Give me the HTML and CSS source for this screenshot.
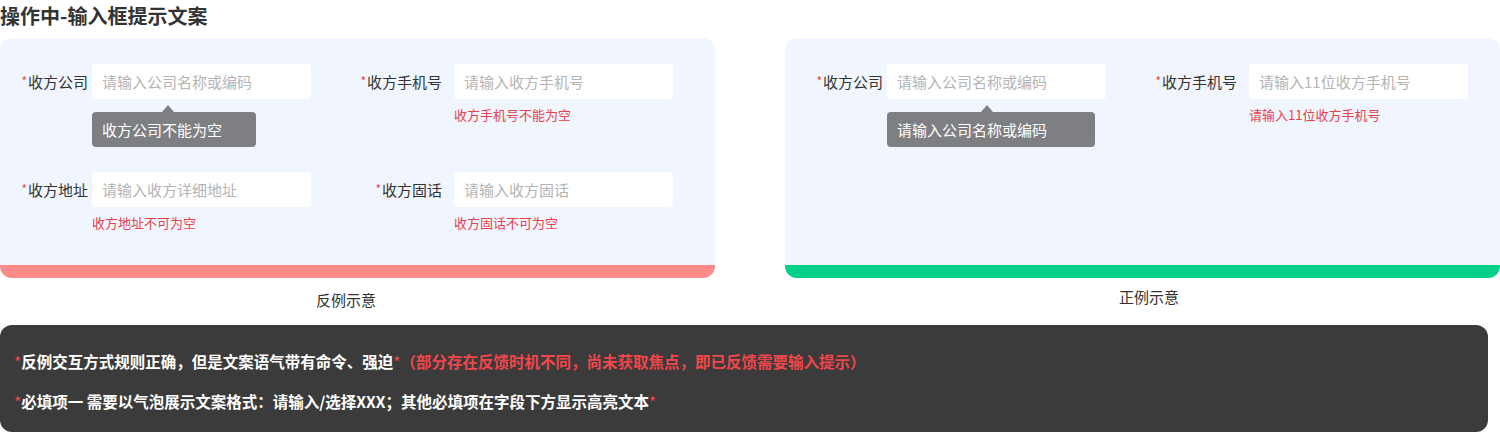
FILE: index.html
```html
<!DOCTYPE html>
<html lang="zh-CN">
<head>
<meta charset="utf-8">
<title>操作中-输入框提示文案</title>
<link rel="stylesheet" href="styles.css">
</head>
<body>
<h1 class="title">操作中-输入框提示文案</h1>
<div class="panels">
  <div class="col">
    <div class="panel panel-bad">
      <div class="grid">
        <div class="field">
          <label class="label"><span class="req">*</span>收方公司</label>
          <div class="control">
            <div class="input">请输入公司名称或编码</div>
            <div class="tip tip-bad">收方公司不能为空</div>
          </div>
        </div>
        <div class="field field-2">
          <label class="label"><span class="req">*</span>收方手机号</label>
          <div class="control">
            <div class="input">请输入收方手机号</div>
            <div class="err">收方手机号不能为空</div>
          </div>
        </div>
        <div class="field">
          <label class="label"><span class="req">*</span>收方地址</label>
          <div class="control">
            <div class="input">请输入收方详细地址</div>
            <div class="err">收方地址不可为空</div>
          </div>
        </div>
        <div class="field field-2">
          <label class="label"><span class="req">*</span>收方固话</label>
          <div class="control">
            <div class="input">请输入收方固话</div>
            <div class="err">收方固话不可为空</div>
          </div>
        </div>
      </div>
    </div>
    <div class="caption caption-bad">反例示意</div>
  </div>
  <div class="col">
    <div class="panel panel-good">
      <div class="grid">
        <div class="field">
          <label class="label"><span class="req">*</span>收方公司</label>
          <div class="control">
            <div class="input">请输入公司名称或编码</div>
            <div class="tip tip-good">请输入公司名称或编码</div>
          </div>
        </div>
        <div class="field field-2">
          <label class="label"><span class="req">*</span>收方手机号</label>
          <div class="control">
            <div class="input">请输入11位收方手机号</div>
            <div class="err">请输入11位收方手机号</div>
          </div>
        </div>
      </div>
    </div>
    <div class="caption caption-good">正例示意</div>
  </div>
</div>
<div class="note">
  <p class="line"><span class="star">*</span>反例交互方式规则正确，但是文案语气带有命令、强迫<span class="star">*</span><span class="hl">（部分存在反馈时机不同，尚未获取焦点，即已反馈需要输入提示）</span></p>
  <p class="line"><span class="star">*</span>必填项一 需要以气泡展示文案格式：请输入/选择XXX；其他必填项在字段下方显示高亮文本<span class="star">*</span></p>
</div>
</body>
</html>
```
FILE: styles.css
```css
* { box-sizing: border-box; }
body {
  margin: 0;
  background: #fff;
  font-family: "Noto Sans CJK SC", "Noto Sans", sans-serif;
  color: #333;
}
.title {
  margin: 0;
  font-size: 20px;
  line-height: 32px;
  font-weight: 700;
  color: #333;
}
.panels {
  display: flex;
  gap: 70px;
  margin-top: 6px;
}
.col {
  width: 715px;
  display: flex;
  flex-direction: column;
}
.panel {
  height: 240px;
  background: #f1f6fe;
  border-radius: 12px;
  border-bottom: 13px solid #ff8a8a;
  padding-top: 26px;
  padding-left: 20px;
}
.panel-good {
  border-bottom-color: #00d08a;
  padding-left: 30px;
}
.grid {
  display: grid;
  grid-template-columns: 291px 343px;
  column-gap: 19px;
  row-gap: 48px;
}
.field {
  display: flex;
  align-items: flex-start;
  gap: 4px;
  height: 60px;
}
.field-2 { gap: 12px; }
.label {
  width: 68px;
  height: 35px;
  display: flex;
  align-items: center;
  justify-content: flex-end;
  font-size: 15px;
  white-space: nowrap;
  color: #333;
}
.field-2 .label { width: 112px; }
.req {
  color: #e5484d;
  font-size: 12px;
  align-self: flex-start;
  margin-top: 8px;
  margin-right: 1px;
}
.control {
  position: relative;
  width: 219px;
}
.input {
  height: 35px;
  background: #fff;
  border-radius: 4px;
  padding-left: 10px;
  font-size: 15px;
  line-height: 35px;
  color: #b4b4b4;
  white-space: nowrap;
}
.err {
  margin-top: 7px;
  font-size: 13px;
  line-height: 18px;
  color: #e8414b;
  white-space: nowrap;
}
.tip {
  position: absolute;
  top: 48px;
  left: 0;
  height: 35px;
  background: #7e7f83;
  border-radius: 4px;
  padding-left: 10px;
  font-size: 15px;
  line-height: 35px;
  color: #fff;
  white-space: nowrap;
}
.tip::before {
  content: "";
  position: absolute;
  top: -7px;
  width: 0;
  height: 0;
  border-left: 6px solid transparent;
  border-right: 6px solid transparent;
  border-bottom: 7px solid #7e7f83;
}
.tip-bad { width: 164px; }
.tip-bad::before { left: 70px; }
.tip-good { width: 208px; }
.tip-good::before { left: 94px; }
.caption {
  font-size: 15px;
  line-height: 22px;
  color: #333;
}
.caption-bad { margin-top: 11px; padding-left: 316px; }
.caption-good { margin-top: 8px; padding-left: 334px; }
.note {
  margin-top: 14px;
  width: 1488px;
  height: 107px;
  background: #3b3b3b;
  border-radius: 12px;
  padding: 25px 0 0 14px;
}
.line {
  margin: 0 0 18px;
  font-size: 15.5px;
  line-height: 22px;
  font-weight: 700;
  color: #fff;
  white-space: nowrap;
}
.star { color: #f0464c; font-weight: 400; }
.hl { color: #f0464c; }
```
